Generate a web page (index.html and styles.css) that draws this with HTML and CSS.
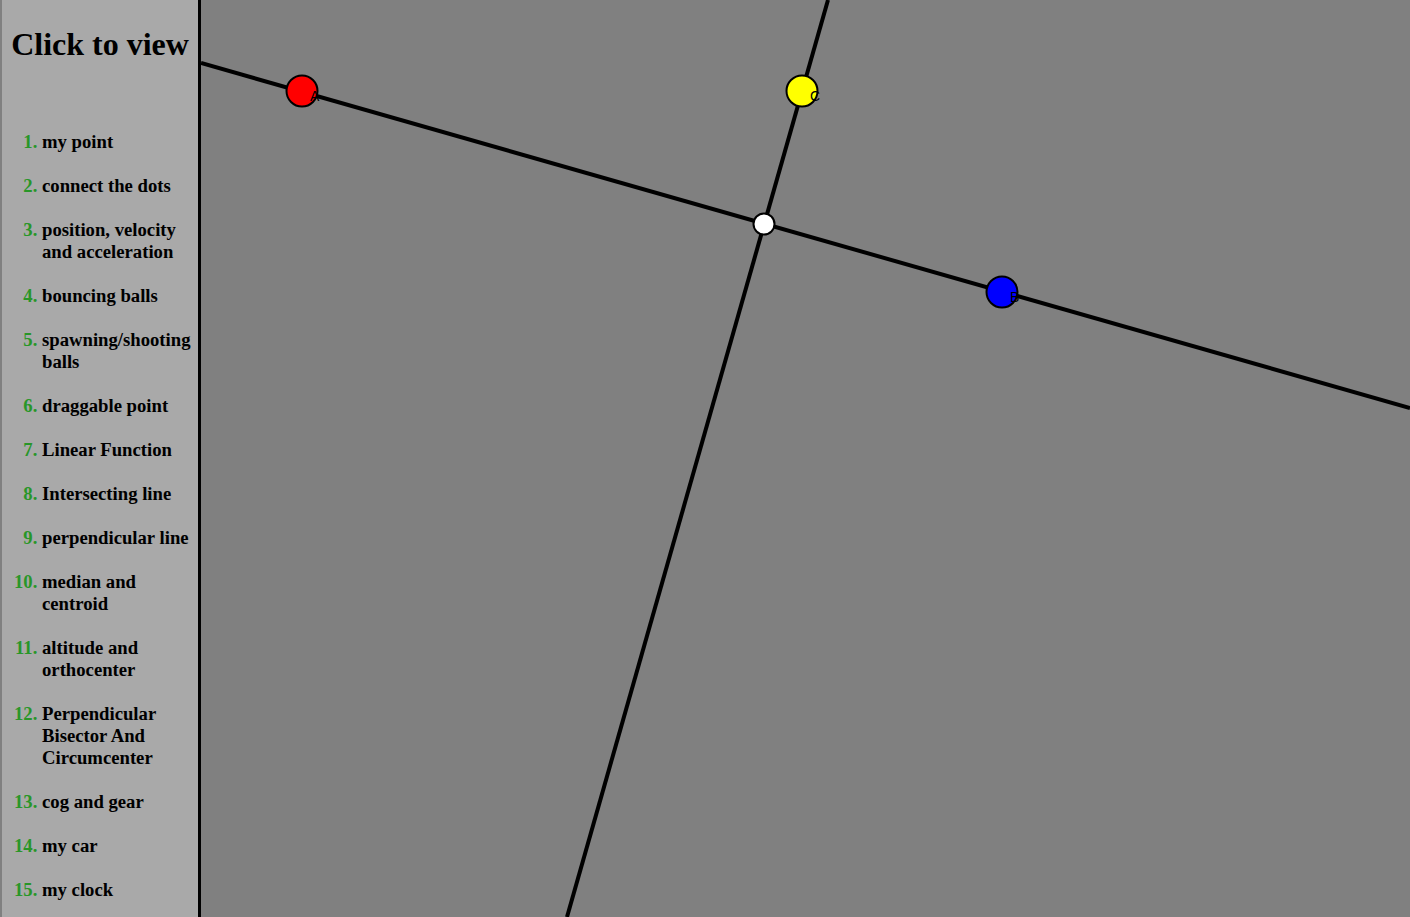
FILE: index.html
```html
<!DOCTYPE html>
<html>

<head>
  <title>Click to view</title>
  <link rel="stylesheet" href="styles.css">
</head>

<body>
  <div class="page">
    <div class="sidebar">
      <h1 class="title">Click to view</h1>
      <ol class="menu">
        <li>my point</li>
        <li>connect the dots</li>
        <li>position, velocity and acceleration</li>
        <li>bouncing balls</li>
        <li>spawning/shooting balls</li>
        <li>draggable point</li>
        <li>Linear Function</li>
        <li>Intersecting line</li>
        <li>perpendicular line</li>
        <li>median and centroid</li>
        <li>altitude and orthocenter</li>
        <li>Perpendicular Bisector And Circumcenter</li>
        <li>cog and gear</li>
        <li>my car</li>
        <li>my clock</li>
      </ol>
    </div>
    <div class="stage">
      <svg class="board" width="1209" height="917" viewBox="0 0 1209 917">
        <line x1="0" y1="63" x2="1209" y2="408" stroke="#000" stroke-width="4" />
        <line x1="627" y1="0" x2="366" y2="917" stroke="#000" stroke-width="4" />
        <circle cx="101" cy="91" r="15.5" fill="#ff0000" stroke="#000" stroke-width="2" />
        <text x="109" y="101" class="label">A</text>
        <circle cx="601" cy="91" r="15.5" fill="#ffff00" stroke="#000" stroke-width="2" />
        <text x="609" y="101" class="label">C</text>
        <circle cx="801" cy="292" r="15.5" fill="#0000ff" stroke="#000" stroke-width="2" />
        <text x="809" y="302" class="label">B</text>
        <circle cx="563" cy="224" r="10.5" fill="#ffffff" stroke="#000" stroke-width="2" />
      </svg>
    </div>
  </div>
</body>

</html>
```

FILE: styles.css
```css
html,
body {
  margin: 0;
  height: 100%;
  background: #808080;
  overflow: hidden;
}
.page {
  display: flex;
  height: 917px;
  padding-left: 2px;
}
.sidebar {
  width: 196px;
  background: #a9a9a9;
  border-right: 3px solid #000;
  font-family: "Liberation Serif", "Times New Roman", serif;
  font-weight: bold;
}
.title {
  font-size: 32px;
  text-align: center;
  margin: 26px 0 0 0;
  white-space: nowrap;
}
.menu {
  margin: 68px 0 0 0;
  padding-left: 40px;
  font-size: 18.7px;
  line-height: 22px;
}
.menu li {
  margin-bottom: 22px;
}
.menu li::marker {
  color: #289628;
}
.stage {
  flex: 1;
}
.board {
  display: block;
}
.label {
  font-family: "Liberation Sans", Arial, sans-serif;
  font-size: 14px;
  fill: #000;
}
```
